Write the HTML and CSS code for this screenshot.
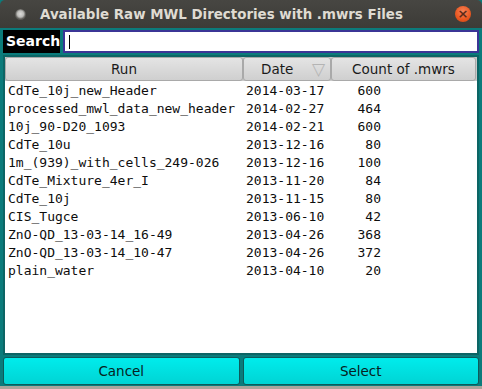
FILE: index.html
```html
<!DOCTYPE html>
<html lang="en">
<head>
    <meta charset="UTF-8">
    <title>Available Raw MWL Directories with .mwrs Files</title>
    <link rel="stylesheet" href="styles.css">
</head>
<body>
    <div class="window">
        <div class="titlebar">
            <span class="menu-dot"></span>
            <span class="title">Available Raw MWL Directories with .mwrs Files</span>
            <span class="close">&#215;</span>
        </div>
        <div class="content">
            <div class="search-row">
                <label class="search-label" for="search">Search</label>
                <div class="search-box"><input id="search" type="text"><span class="caret"></span></div>
            </div>
            <div class="table-frame">
                <div class="thead">
                    <div class="th">Run</div>
                    <div class="th th-sort">Date <span class="sort-arrow">&#9661;</span></div>
                    <div class="th">Count of .mwrs</div>
                </div>
                <div class="tbody">
                    <div class="tr"><span class="td">CdTe_10j_new_Header</span><span class="td">2014-03-17</span><span class="td"><span class="num">600</span></span></div>
                    <div class="tr"><span class="td">processed_mwl_data_new_header</span><span class="td">2014-02-27</span><span class="td"><span class="num">464</span></span></div>
                    <div class="tr"><span class="td">10j_90-D20_1093</span><span class="td">2014-02-21</span><span class="td"><span class="num">600</span></span></div>
                    <div class="tr"><span class="td">CdTe_10u</span><span class="td">2013-12-16</span><span class="td"><span class="num">80</span></span></div>
                    <div class="tr"><span class="td">1m_(939)_with_cells_249-026</span><span class="td">2013-12-16</span><span class="td"><span class="num">100</span></span></div>
                    <div class="tr"><span class="td">CdTe_Mixture_4er_I</span><span class="td">2013-11-20</span><span class="td"><span class="num">84</span></span></div>
                    <div class="tr"><span class="td">CdTe_10j</span><span class="td">2013-11-15</span><span class="td"><span class="num">80</span></span></div>
                    <div class="tr"><span class="td">CIS_Tugce</span><span class="td">2013-06-10</span><span class="td"><span class="num">42</span></span></div>
                    <div class="tr"><span class="td">ZnO-QD_13-03-14_16-49</span><span class="td">2013-04-26</span><span class="td"><span class="num">368</span></span></div>
                    <div class="tr"><span class="td">ZnO-QD_13-03-14_10-47</span><span class="td">2013-04-26</span><span class="td"><span class="num">372</span></span></div>
                    <div class="tr"><span class="td">plain_water</span><span class="td">2013-04-10</span><span class="td"><span class="num">20</span></span></div>
                </div>
            </div>
            <div class="buttons">
                <button class="btn">Cancel</button>
                <button class="btn">Select</button>
            </div>
        </div>
    </div>
</body>
</html>
```

FILE: styles.css
```css
html, body {
    margin: 0;
    padding: 0;
}

body {
    width: 482px;
    height: 389px;
    background: #aba59c;
    font-family: "DejaVu Sans", sans-serif;
    overflow: hidden;
}

.window {
    width: 482px;
    height: 386px;
    display: flex;
    flex-direction: column;
    background: #0b7b7b;
}

/* Title bar */
.titlebar {
    height: 28px;
    flex: none;
    display: flex;
    align-items: center;
    background: linear-gradient(#474642 0%, #3c3b37 100%);
    border-radius: 5px 5px 0 0;
    color: #dfdbd2;
}

.menu-dot {
    width: 11px;
    height: 11px;
    margin: 0 0 0 15px;
    border-radius: 50%;
    background: radial-gradient(circle at 50% 45%, #dcdcda 0%, #bdbdba 38%, #5f5e5a 62%, #45443f 100%);
}

.title {
    flex: 1;
    margin-left: 14px;
    font-weight: bold;
    font-size: 13.4px;
}

.close {
    width: 16px;
    height: 16px;
    margin-right: 11px;
    border-radius: 50%;
    background: radial-gradient(circle at 50% 35%, #f7845a 0%, #e9561f 60%, #c94514 100%);
    color: #5c2a18;
    font-size: 13px;
    line-height: 15px;
    text-align: center;
    font-weight: bold;
}

/* Content */
.content {
    flex: 1;
    display: flex;
    flex-direction: column;
    padding: 2px 3px 0 3px;
    gap: 2px;
}

.search-row {
    display: flex;
    height: 23px;
    gap: 3px;
}

.search-label {
    width: 57px;
    background: #000;
    color: #fff;
    font-weight: bold;
    font-size: 14px;
    line-height: 23px;
    padding-left: 3px;
    box-sizing: border-box;
}

.search-box {
    flex: 1;
    position: relative;
    background: #fff;
    border: 2px solid #3b3596;
    box-sizing: border-box;
}

.search-box input {
    width: 100%;
    height: 100%;
    border: none;
    outline: none;
    padding: 0;
    background: transparent;
}

.caret {
    position: absolute;
    left: 4px;
    top: 3px;
    width: 1px;
    height: 14px;
    background: #000;
}

/* Table */
.table-frame {
    flex: 1;
    display: flex;
    flex-direction: column;
    border: 2px solid #0c6565;
    background: #fff;
}

.thead {
    display: grid;
    grid-template-columns: 238px 88px 145px;
    height: 24px;
    background: #c8c8c8;
}

.th {
    display: flex;
    align-items: center;
    justify-content: center;
    background: linear-gradient(#e4e4e4 0%, #cfcfcf 100%);
    border: 1px solid #a9a9a9;
    border-radius: 3px;
    color: #1a1a1a;
    font-size: 13.5px;
    position: relative;
}

.th-sort {
    justify-content: flex-start;
    padding-left: 17px;
}

.sort-arrow {
    position: absolute;
    right: 5px;
    top: 1px;
    color: #b4b4b4;
    font-size: 17px;
}

.tbody {
    flex: 1;
    padding-top: 1px;
    font-family: "DejaVu Sans Mono", monospace;
    font-size: 13px;
    color: #0d0d0d;
}

.tr {
    display: grid;
    grid-template-columns: 238px 88px 145px;
    height: 18px;
    line-height: 18px;
}

.td {
    padding-left: 3px;
    white-space: nowrap;
}

.num {
    display: inline-block;
    width: 47px;
    text-align: right;
}

/* Buttons */
.buttons {
    display: grid;
    grid-template-columns: 1fr 1fr;
    gap: 3px;
    height: 28px;
    padding-bottom: 1px;
}

.btn {
    margin: 0;
    padding: 0;
    border: 1px solid #0d5a5a;
    border-radius: 3px;
    background: linear-gradient(#00ecec 0%, #00d4d4 100%);
    color: #062222;
    font-family: "DejaVu Sans", sans-serif;
    font-size: 13.5px;
}
```
